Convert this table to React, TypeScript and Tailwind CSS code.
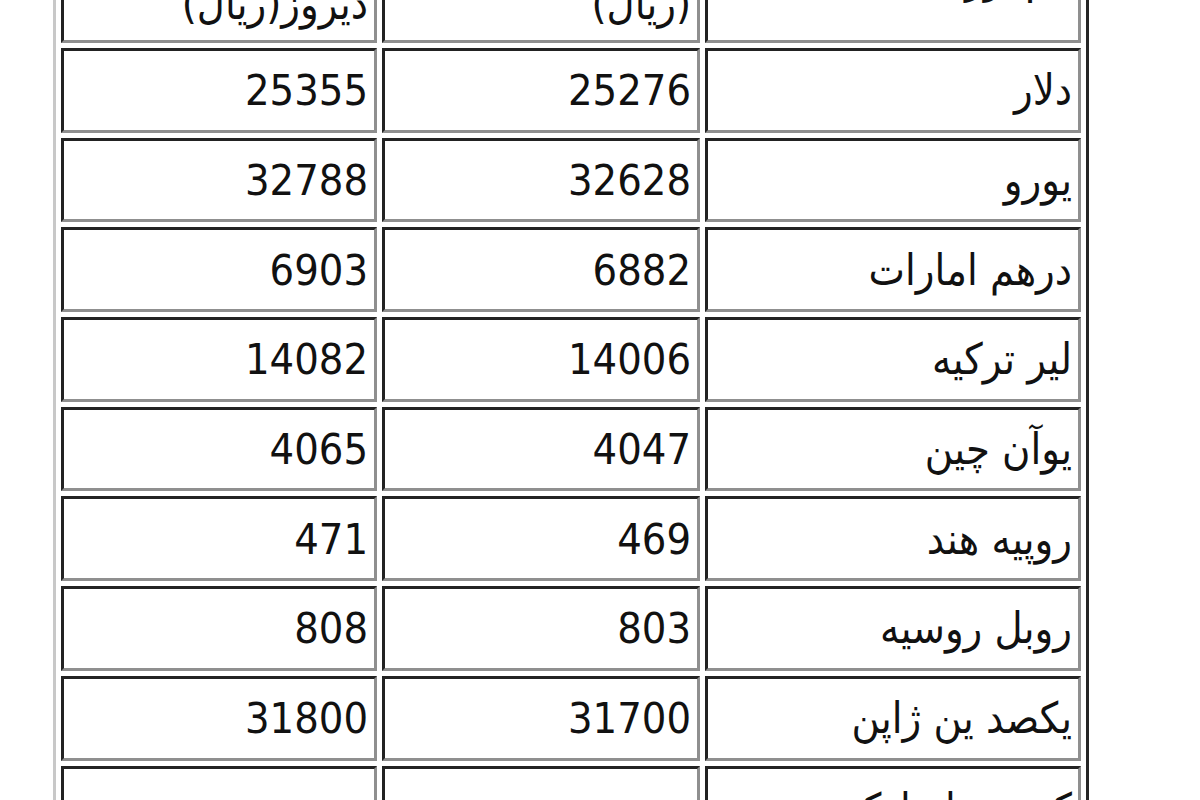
const rows = [
  ["دلار", "25276", "25355"],
  ["یورو", "32628", "32788"],
  ["درهم امارات", "6882", "6903"],
  ["لیر ترکیه", "14006", "14082"],
  ["یوآن چین", "4047", "4065"],
  ["روپیه هند", "469", "471"],
  ["روبل روسیه", "803", "808"],
  ["یکصد ین ژاپن", "31700", "31800"],
];

const cell =
  "border-[3px] border-t-[#222] border-l-[#222] border-r-[#8f8f8f] border-b-[#8f8f8f] px-[6px] py-0 text-right align-middle";

export default function App() {
  return (
    <div className="h-screen overflow-hidden bg-white font-['DejaVu_Sans_Condensed','DejaVu_Sans',sans-serif] text-[43px] leading-[52px] text-[#111]">
      <table
        dir="rtl"
        className="ml-[53px] mt-[-91px] w-[1036px] table-fixed border-separate border-spacing-[5px] border-[3px] border-t-[#c8c8c8] border-l-[#c8c8c8] border-r-[#262626] border-b-[#262626]"
      >
        <thead>
          <tr>
            <td className={`${cell} w-[376px] pt-[6px] pb-[10px]`}>نام ارز</td>
            <td className={`${cell} w-[318px] pt-[6px] pb-[10px]`}>
              نرخ امروز
              <br />
              (ریال)
            </td>
            <td className={`${cell} w-[316px] pt-[6px] pb-[10px]`}>
              نرخ
              <br />
              دیروز(ریال)
            </td>
          </tr>
        </thead>
        <tbody>
          {rows.map(([name, today, yesterday]) => (
            <tr key={name}>
              <td className={`${cell} h-[84.7px]`}>{name}</td>
              <td className={`${cell} h-[84.7px]`}>{today}</td>
              <td className={`${cell} h-[84.7px]`}>{yesterday}</td>
            </tr>
          ))}
          <tr>
            <td className={`${cell} pt-[14px] pb-[14px]`}>
              کرون دانمارک
              <br />
              (ده واحد)
            </td>
            <td className={cell}>4120</td>
            <td className={cell}>4135</td>
          </tr>
        </tbody>
      </table>
    </div>
  );
}
